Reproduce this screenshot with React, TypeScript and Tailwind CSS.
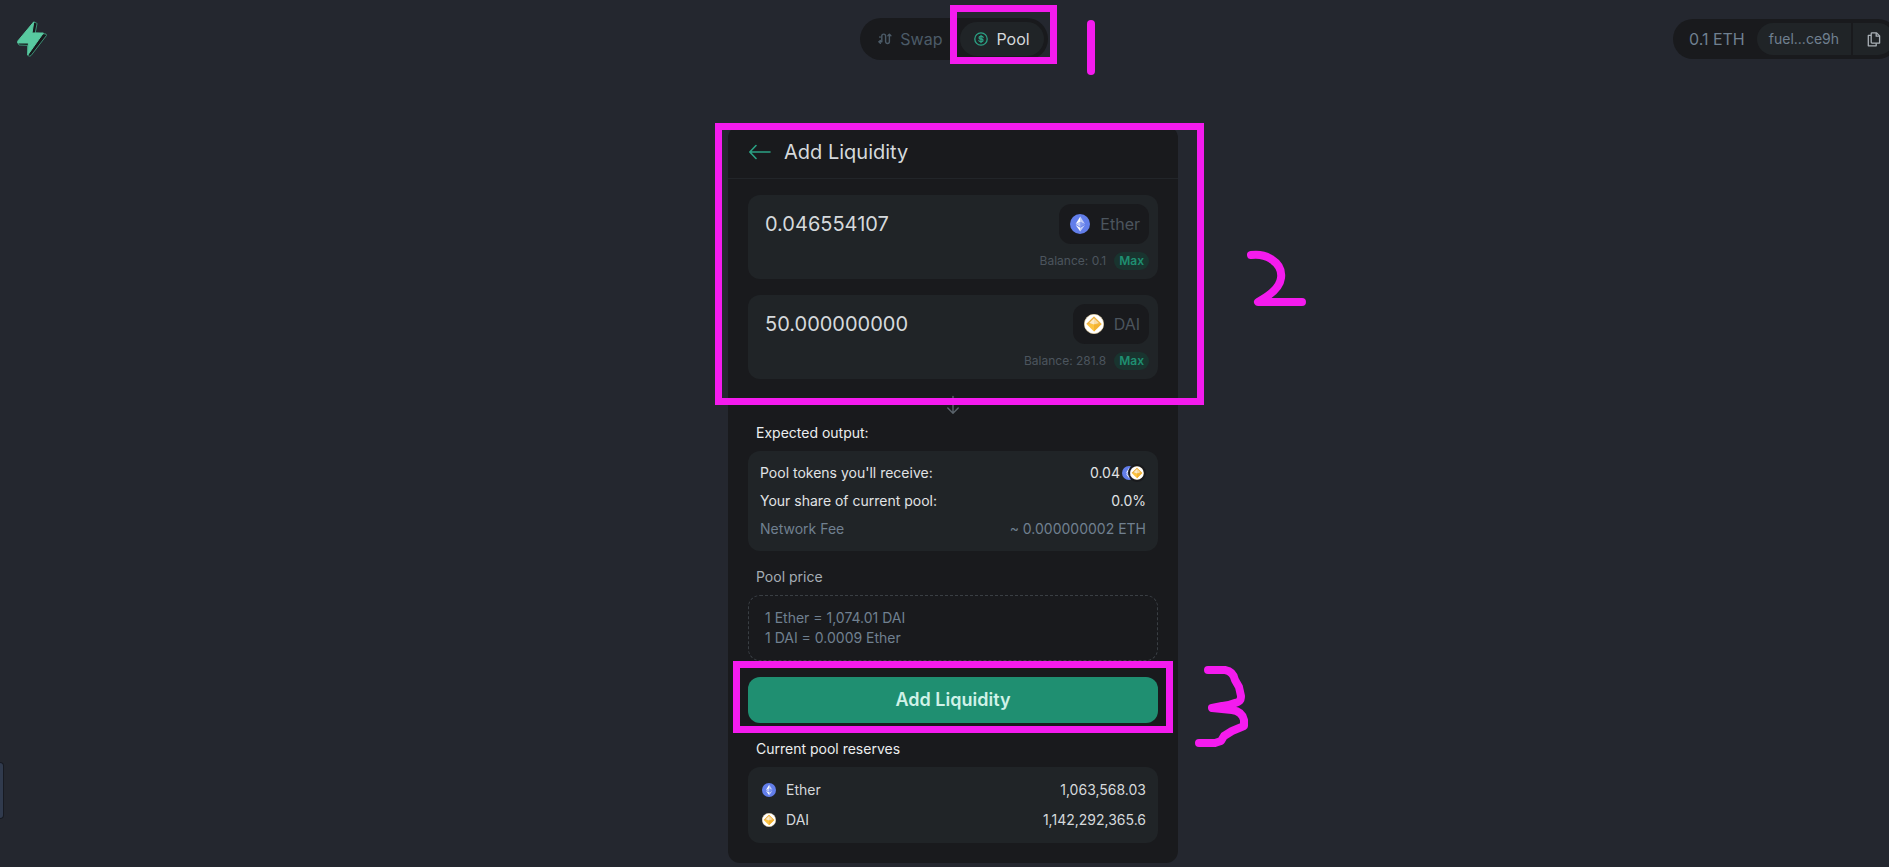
import type { ReactNode } from "react";

type IconProps = { className?: string };

function BoltLogo() {
  return (
    <svg viewBox="0 0 30 36" className="h-9 w-[30px]" fill="none" aria-hidden="true">
      <path
        d="M17 1.2 19.6 2 20 2.8 18.2 12 29 13 29.4 14.6 14 34.6 12.6 35.2 10.6 34.4 10.6 24.4 2 24 .8 21.8Z"
        fill="#17191d"
        stroke="#3c8f74"
        strokeLinejoin="round"
      />
      <path d="M16.8.8 15 12h11.4L10.8 34l.6-12H.8V20Z" fill="#58c9a0" stroke="#58c9a0" strokeLinejoin="round" />
    </svg>
  );
}

function SwapIcon() {
  return (
    <svg viewBox="0 0 14 14" className="size-[14px]" fill="none" stroke="currentColor" strokeWidth="1.4" strokeLinecap="round" strokeLinejoin="round" aria-hidden="true">
      <path d="M1.200 9.800h2.600V4a1.900 1.900 0 0 1 3.800 0v5.600a1.900 1.900 0 0 0 3.800 0V2.600" />
      <path d="M2.400 8.400 1 9.800l1.400 1.500M2 5.400V4.600M9.900 3.800l1.500-1.600 1.500 1.600" />
    </svg>
  );
}

function CoinIcon() {
  return (
    <svg viewBox="0 0 14 14" className="size-[14px]" fill="none" stroke="currentColor" strokeWidth="1.3" strokeLinecap="round" strokeLinejoin="round" aria-hidden="true">
      <circle cx="7" cy="7" r="6.2" />
      <path d="M9.1 5.4A1.5 1.5 0 0 0 7.7 4.4H6.4a1.3 1.3 0 0 0 0 2.6h1.3a1.3 1.3 0 0 1 0 2.6H6.3a1.5 1.5 0 0 1-1.4-1M7 3.4v7.2" />
    </svg>
  );
}

function CopyIcon() {
  return (
    <svg viewBox="0 0 14 15" className="h-[15px] w-[14px]" fill="none" stroke="currentColor" strokeWidth="1.3" strokeLinejoin="round" aria-hidden="true">
      <path d="M5 .9h4.6l3 3v7.2H5a.8.8 0 0 1-.8-.8V1.700A.8.8 0 0 1 5 .9Z" />
      <path d="M9.200 1v3.200h3.200M4.200 3.400H1.300v10.400h7.900v-2.600" />
    </svg>
  );
}

function EtherIcon({ className }: IconProps) {
  return (
    <svg viewBox="0 0 20 20" className={className} aria-hidden="true">
      <circle cx="10" cy="10" r="10" fill="#627eea" />
      <path d="M10.300 2.500v5.500l4.700 2.100Z" fill="#c0cbf7" />
      <path d="M10.300 2.500 5.600 10.100 10.300 8Z" fill="#fff" />
      <path d="M10.300 13.700v3.800L15 11Z" fill="#c0cbf7" />
      <path d="M10.300 17.500v-3.800L5.600 11Z" fill="#fff" />
      <path d="m10.300 12.900 4.700-2.800L10.300 8Z" fill="#8197ee" />
      <path d="m5.600 10.100 4.700 2.800V8Z" fill="#c0cbf7" />
    </svg>
  );
}

function DaiIcon({ className }: IconProps) {
  return (
    <svg viewBox="0 0 20 20" className={className} aria-hidden="true">
      <circle cx="10" cy="10" r="9.700" fill="#fff" stroke="#f3dca8" strokeWidth=".6" />
      <path d="M10 2.500 2.400 10 10 17.500 17.600 10Z" fill="#fcc342" />
      <path d="M10 2.500 2.400 10H10Z" fill="#eab04a" />
      <path d="M10 2.500V10h7.600Z" fill="#efb649" />
      <path d="M10 4.300 5.200 9 10 10.600Z" fill="#fbe9c6" />
      <path d="M10 4.300 14.800 9 10 10.600Z" fill="#f7dba6" />
      <path d="M10 10.600V17.500L17.600 10Z" fill="#f2b233" />
    </svg>
  );
}

const tokenIcons = { Ether: EtherIcon, DAI: DaiIcon };

type Token = keyof typeof tokenIcons;

function Header() {
  return (
    <header className="flex items-center pt-[18px] pr-2 pl-[17px]">
      <div className="flex-1">
        <a href="#" aria-label="Home" className="inline-block align-middle">
          <BoltLogo />
        </a>
      </div>

      <nav className="-ml-[7px] flex h-[42px] items-center gap-1 rounded-full bg-[#191a1d] p-1">
        <a href="#swap" className="flex h-[34px] items-center gap-2 rounded-full px-[14px] text-[#4c5b68]">
          <SwapIcon />
          Swap
        </a>
        <a href="#pool" className="relative flex h-[34px] items-center gap-2 rounded-full bg-[#202427] px-[14px] text-[#d5d9dc]">
          <span className="text-[#2ba184]">
            <CoinIcon />
          </span>
          Pool
          <Highlight className="-top-[17px] -right-[13px] -bottom-2 -left-[10px]" />
        </a>
      </nav>

      <div className="flex flex-1 justify-end">
        <div className="flex h-10 items-center rounded-full bg-[#191a1d] p-1 text-[#708090]">
          <span className="px-3">0.1 ETH</span>
          <div className="flex h-8 gap-[2px]">
            <button className="rounded-l-full bg-[#202427] px-3 text-sm">fuel...ce9h</button>
            <button aria-label="Copy address" className="flex w-[41px] items-center justify-center rounded-r-full bg-[#202427] text-[#a9b0b6]">
              <CopyIcon />
            </button>
          </div>
        </div>
      </div>
    </header>
  );
}

function CoinInput({ token, value, balance }: { token: Token; value: string; balance: string }) {
  const Icon = tokenIcons[token];
  return (
    <div className="rounded-xl bg-[#202427] p-[9px]">
      <div className="flex h-10 items-center">
        <input
          aria-label={`${token} amount`}
          defaultValue={value}
          className="min-w-0 flex-1 bg-transparent pl-2 text-xl text-[#d5d9dc] outline-none"
        />
        <button className="flex h-10 items-center gap-[10px] rounded-xl bg-[#191a1d] pr-[9px] pl-[11px] text-base text-[#4c555e]">
          <Icon className="size-5" />
          {token}
        </button>
      </div>
      <div className="mt-2 flex items-center justify-end gap-2 text-xs text-[#4c555e]">
        <span>Balance: {balance}</span>
        <button className="h-[18px] rounded-full bg-[#19342f] px-[5px] font-semibold text-[#1f8f71]">Max</button>
      </div>
    </div>
  );
}

function Row({ label, children, className = "" }: { label: ReactNode; children: ReactNode; className?: string }) {
  return (
    <div className={`flex items-center justify-between ${className}`}>
      <dt className="flex items-center gap-[10px]">{label}</dt>
      <dd className="flex items-center">{children}</dd>
    </div>
  );
}

function Reserve({ token, amount }: { token: Token; amount: string }) {
  const Icon = tokenIcons[token];
  return (
    <Row
      className="h-[22px]"
      label={
        <>
          <Icon className="ml-[2px] size-[14px]" />
          {token}
        </>
      }
    >
      {amount}
    </Row>
  );
}

function AddLiquidity() {
  return (
    <main className="relative mx-auto mt-[66px] w-[450px] rounded-xl bg-[#191a1d] text-sm">
      <div className="flex h-[53px] items-center gap-[13px] border-b border-[#222529] px-5">
        <button aria-label="Back" className="text-[#2ba184]">
          <svg viewBox="0 0 23 16" className="h-4 w-[23px]" fill="none" stroke="currentColor" strokeWidth="1.600" strokeLinecap="round" strokeLinejoin="round" aria-hidden="true">
            <path d="M22 8H2M8 1.500 1.800 8 8 14.500" />
          </svg>
        </button>
        <h1 className="text-xl text-[#d5d9dc]">Add Liquidity</h1>
      </div>

      <div className="px-5 pt-4 pb-5">
        <div className="flex flex-col gap-4">
          <CoinInput token="Ether" value="0.046554107" balance="0.1" />
          <CoinInput token="DAI" value="50.000000000" balance="281.8" />
        </div>

        <div className="mt-4 mb-2 flex h-5 justify-center text-[#5b646c]">
          <svg viewBox="0 0 14 20" className="h-5 w-[14px]" fill="none" stroke="currentColor" strokeWidth="1.400" strokeLinecap="round" strokeLinejoin="round" aria-hidden="true">
            <path d="M7 1.500V18M1.800 13 7 18.200 12.200 13" />
          </svg>
        </div>

        <h2 className="px-2 text-[#eceeef]">Expected output:</h2>
        <dl className="mt-2 flex flex-col gap-2 rounded-xl bg-[#202427] p-3 text-[#e0e3e5]">
          <Row label="Pool tokens you'll receive:">
            0.04
            <span className="mx-[2px] flex items-center">
              <EtherIcon className="size-[14px]" />
              <DaiIcon className="-ml-[6px] size-[14px] rounded-full shadow-[0_0_0_2px_#191a1d]" />
            </span>
          </Row>
          <Row label="Your share of current pool:">0.0%</Row>
          <Row label="Network Fee" className="text-[#708090]">
            ~ 0.000000002 ETH
          </Row>
        </dl>

        <h2 className="mt-4 px-2 text-[#a5adb4]">Pool price</h2>
        <div className="mt-2 rounded-xl border border-dashed border-[#3a3f44] px-4 py-3 text-[#708090]">
          <p>1 Ether = 1,074.01 DAI</p>
          <p>1 DAI = 0.0009 Ether</p>
        </div>

        <div className="relative mt-4">
          <button className="h-[46px] w-full rounded-xl bg-[#1f8f71] text-lg font-semibold text-[#d0f2e8]">
            Add Liquidity
          </button>
          <Highlight className="-top-4 -right-[15px] -bottom-[10px] -left-[15px]" />
        </div>

        <h2 className="mt-4 px-2 text-[#eceeef]">Current pool reserves</h2>
        <dl className="mt-2 flex flex-col gap-2 rounded-xl bg-[#202427] p-3 text-[#d5d9dc]">
          <Reserve token="Ether" amount="1,063,568.03" />
          <Reserve token="DAI" amount="1,142,292,365.6" />
        </dl>
      </div>

      <Highlight className="-top-[3px] -right-[26px] -left-[13px] h-[282px]" />
    </main>
  );
}

function Highlight({ className = "" }: IconProps) {
  return <span className={`pointer-events-none absolute border-7 border-[#f41bee] ${className}`} />;
}

// Hand-drawn step numbers beside each highlighted step
function StepMarks() {
  return (
    <svg
      viewBox="0 0 240 760"
      className="pointer-events-none absolute top-0 left-1/2 ml-[127px] h-[760px] w-[240px]"
      fill="none"
      stroke="#f41bee"
      strokeWidth="8"
      strokeLinecap="round"
      strokeLinejoin="round"
      aria-hidden="true"
    >
      <path d="M11 24V71" />
      <path d="M171 255c8-1 14 0 20 4 8 5 11 12 10 19-1 9-10 17-23 24h44" />
      <path d="M128 670h17c6 1 9 5 10 10l4 7 2 9c0 5-2 6-6 7-5 2-8 3-13 3l-10 2 20 2c7 1 11 5 12 10v6l-12 5-8 5-3 5-6 2h-16" />
    </svg>
  );
}

export default function App() {
  return (
    <div className="relative min-h-screen overflow-hidden bg-[#24272f] font-[Inter,sans-serif]">
      <div className="relative w-[calc(100%+17px)]">
        <Header />
        <AddLiquidity />
        <StepMarks />
      </div>
      <div className="absolute top-[762px] left-0 h-[57px] w-1 rounded-r-sm border border-l-0 border-[#171a22] bg-[#303a4d]" />
    </div>
  );
}
